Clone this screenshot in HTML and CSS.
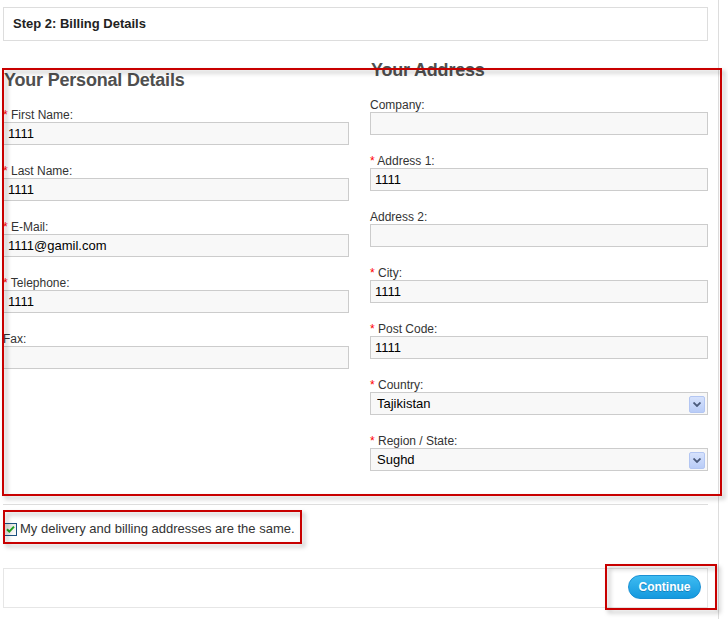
FILE: index.html
```html
<!DOCTYPE html>
<html>
<head>
<meta charset="utf-8">
<title>Step 2: Billing Details</title>
<link rel="stylesheet" href="styles.css">
</head>
<body>
<div class="page">
  <div class="checkout">
    <div class="step-head">Step 2: Billing Details</div>
    <div class="billing">
      <div class="col col-left">
        <h2>Your Personal Details</h2>
        <div class="field"><label><span class="req">*</span> First Name:</label><input class="text" type="text" value="1111"></div>
        <div class="field"><label><span class="req">*</span> Last Name:</label><input class="text" type="text" value="1111"></div>
        <div class="field"><label><span class="req">*</span> E-Mail:</label><input class="text" type="text" value="1111@gamil.com"></div>
        <div class="field"><label><span class="req">*</span> Telephone:</label><input class="text" type="text" value="1111"></div>
        <div class="field"><label>Fax:</label><input class="text" type="text" value=""></div>
      </div>
      <div class="col col-right">
        <h2>Your Address</h2>
        <div class="field"><label>Company:</label><input class="text" type="text" value=""></div>
        <div class="field"><label><span class="req">*</span> Address 1:</label><input class="text" type="text" value="1111"></div>
        <div class="field"><label>Address 2:</label><input class="text" type="text" value=""></div>
        <div class="field"><label><span class="req">*</span> City:</label><input class="text" type="text" value="1111"></div>
        <div class="field"><label><span class="req">*</span> Post Code:</label><input class="text" type="text" value="1111"></div>
        <div class="field"><label><span class="req">*</span> Country:</label>
          <div class="select-wrap"><select class="select"><option>Tajikistan</option></select><span class="arrow"><svg width="8" height="5" viewBox="0 0 8 5"><path d="M0.5 0.5 L4 4 L7.5 0.5" fill="none" stroke="#4b5b7c" stroke-width="1.8"/></svg></span></div>
        </div>
        <div class="field"><label><span class="req">*</span> Region / State:</label>
          <div class="select-wrap"><select class="select"><option>Sughd</option></select><span class="arrow"><svg width="8" height="5" viewBox="0 0 8 5"><path d="M0.5 0.5 L4 4 L7.5 0.5" fill="none" stroke="#4b5b7c" stroke-width="1.8"/></svg></span></div>
        </div>
      </div>
    </div>
    <div class="divider"></div>
    <label class="same"><svg class="check" width="13" height="13" viewBox="0 0 13 13"><defs><linearGradient id="cb" x1="0" y1="0" x2="1" y2="1"><stop offset="0" stop-color="#dcdcd6"/><stop offset="1" stop-color="#ffffff"/></linearGradient></defs><rect x="0.5" y="0.5" width="12" height="12" fill="url(#cb)" stroke="#1c5180"/><path d="M3 6.2 L5.3 8.6 L10 3.6" fill="none" stroke="#21a121" stroke-width="2"/></svg><span>My delivery and billing addresses are the same.</span></label>
    <div class="buttons"><a class="button">Continue</a></div>
  </div>
  <div class="mark mark-form"></div>
  <div class="mark mark-same"></div>
  <div class="mark mark-btn"></div>
</div>
</body>
</html>
```
FILE: styles.css
```css
html, body {
  margin: 0;
  padding: 0;
  background: #fff;
}
body {
  font-family: "Liberation Sans", Arial, sans-serif;
  font-size: 12px;
  color: #333;
}
.page {
  position: relative;
  width: 718px;
  min-height: 619px;
  border-right: 1px solid #ddd;
}
.checkout {
  padding: 7px 10px 0 3px;
}
.step-head {
  border: 1px solid #ddd;
  padding: 8px 9px;
  line-height: 16px;
  font-size: 13px;
  font-weight: bold;
  color: #222;
}
.billing {
  display: flex;
  align-items: flex-start;
  margin-top: 19px;
}
.col-left {
  width: 346px;
  padding-top: 10px;
}
.col-right {
  width: 338px;
  margin-left: 21px;
}
h2 {
  margin: 0 0 17px 1px;
  font-size: 18px;
  line-height: 21px;
  font-weight: bold;
  color: #4f4f4f;
  letter-spacing: -0.2px;
}
.field {
  margin-bottom: 19px;
}
.field label {
  display: block;
  line-height: 14px;
  color: #333;
}
.req {
  color: #f00;
}
.text, .select {
  display: block;
  box-sizing: border-box;
  width: 100%;
  height: 23px;
  margin: 0;
  border: 1px solid #ccc;
  background: #f8f8f8;
  font-family: "Liberation Sans", Arial, sans-serif;
  font-size: 13px;
  color: #000;
  padding: 0 4px;
  outline: none;
  border-radius: 0;
}
.select {
  -webkit-appearance: none;
  appearance: none;
  padding-left: 6px;
}
.select-wrap {
  position: relative;
}
.arrow {
  position: absolute;
  right: 3px;
  top: 4px;
  width: 16px;
  height: 17px;
  box-sizing: border-box;
  border: 1px solid #b3c6f2;
  border-radius: 2px;
  background: linear-gradient(#d6e2fc, #b9ccf7);
  display: flex;
  align-items: center;
  justify-content: center;
  pointer-events: none;
}
.divider {
  height: 1px;
  background: #ddd;
  margin-top: 14px;
}
.same {
  display: flex;
  align-items: center;
  margin-top: 16px;
  margin-left: 1px;
  line-height: 16px;
  font-size: 13px;
  color: #333;
}
.same .check {
  display: block;
  margin-right: 3px;
}
.buttons {
  display: flex;
  justify-content: flex-end;
  margin-top: 31px;
  border: 1px solid #e6e6e6;
  padding: 6px 6px 8px;
}
.button {
  display: block;
  width: 73px;
  height: 24px;
  box-sizing: border-box;
  border-radius: 12px;
  border: 1px solid #1990d4;
  background: linear-gradient(#3dbbf1, #1599de);
  color: #fff;
  font-weight: bold;
  font-size: 12px;
  line-height: 22px;
  text-align: center;
  text-shadow: 0 1px 0 rgba(0, 60, 110, 0.35);
}
.mark {
  position: absolute;
  border: 2px solid #c80000;
  box-sizing: border-box;
  filter: drop-shadow(3px 3px 2px rgba(0, 0, 0, 0.28));
  pointer-events: none;
}
.mark-form {
  left: 2px;
  top: 68px;
  width: 720px;
  height: 428px;
}
.mark-same {
  left: 3px;
  top: 510px;
  width: 299px;
  height: 34px;
}
.mark-btn {
  left: 605px;
  top: 564px;
  width: 112px;
  height: 46px;
}
```
